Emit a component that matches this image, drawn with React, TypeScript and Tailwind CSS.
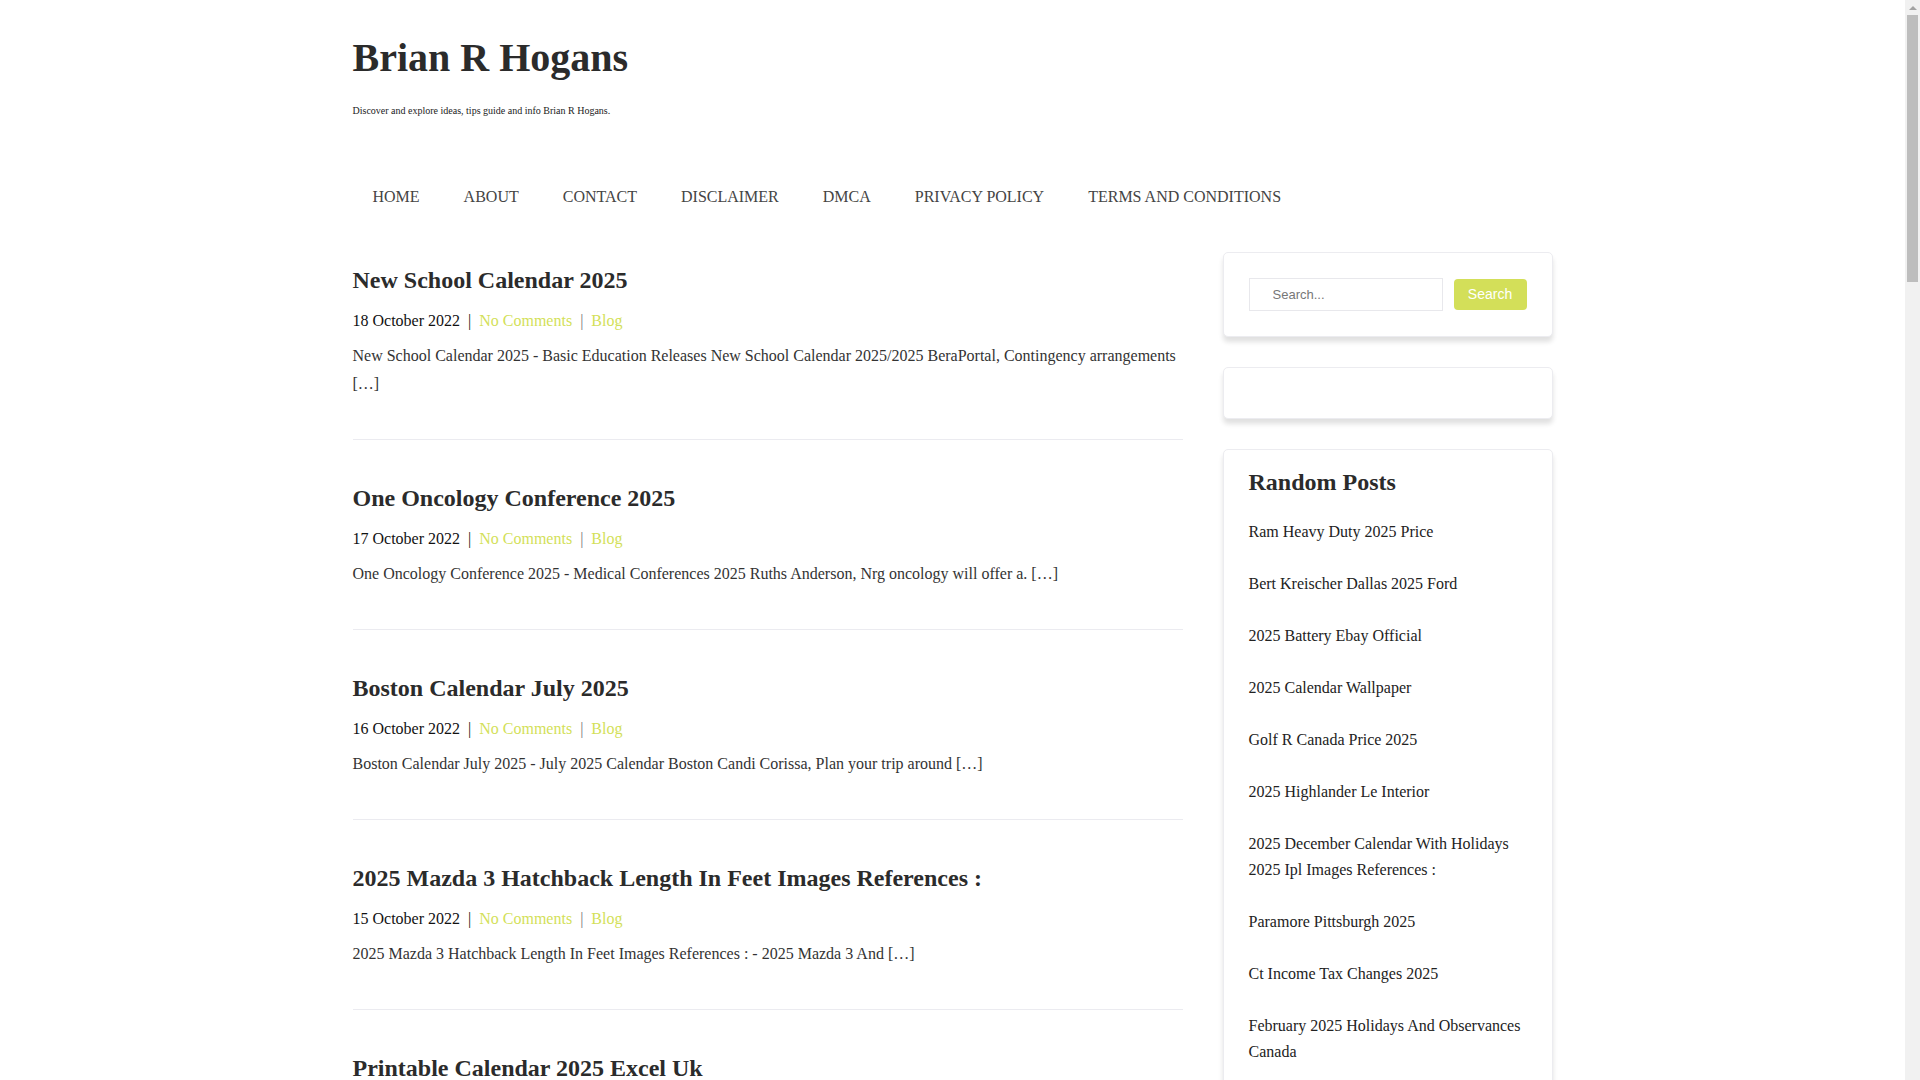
import React from 'react';

const navItems = ['HOME', 'ABOUT', 'CONTACT', 'DISCLAIMER', 'DMCA', 'PRIVACY POLICY', 'TERMS AND CONDITIONS'];

const posts = [
  {
    title: 'New School Calendar 2025',
    date: '18 October 2022',
    excerpt:
      'New School Calendar 2025 - Basic Education Releases New School Calendar 2025/2025 BeraPortal, Contingency arrangements […]',
  },
  {
    title: 'One Oncology Conference 2025',
    date: '17 October 2022',
    excerpt:
      'One Oncology Conference 2025 - Medical Conferences 2025 Ruths Anderson, Nrg oncology will offer a. […]',
  },
  {
    title: 'Boston Calendar July 2025',
    date: '16 October 2022',
    excerpt:
      'Boston Calendar July 2025 - July 2025 Calendar Boston Candi Corissa, Plan your trip around […]',
  },
  {
    title: '2025 Mazda 3 Hatchback Length In Feet Images References :',
    date: '15 October 2022',
    excerpt: '2025 Mazda 3 Hatchback Length In Feet Images References : - 2025 Mazda 3 And […]',
  },
  {
    title: 'Printable Calendar 2025 Excel Uk',
    date: '14 October 2022',
    excerpt: 'Printable Calendar 2025 Excel Uk - Free Printable 2025 Calendar Uk Templates, Download your yearly planner […]',
  },
  {
    title: '2025 Honda Civic Type R Price',
    date: '13 October 2022',
    excerpt: '2025 Honda Civic Type R Price - New Honda Civic Type R 2025 Specs, Release Date and Price […]',
  },
  {
    title: 'Lunar Calendar 2025 January',
    date: '12 October 2022',
    excerpt: 'Lunar Calendar 2025 January - Moon Phases January 2025 Calendar, Full moon and new moon dates […]',
  },
  {
    title: 'Nfl Draft 2025 Mock Draft',
    date: '11 October 2022',
    excerpt: 'Nfl Draft 2025 Mock Draft - Early 2025 Nfl Mock Draft First Round Picks, Top prospects to watch […]',
  },
  {
    title: 'Ford Ranger 2025 Interior',
    date: '10 October 2022',
    excerpt: 'Ford Ranger 2025 Interior - 2025 Ford Ranger Raptor Interior Review, Cabin and technology […]',
  },
  {
    title: 'Academic Calendar 2025 Uc Davis',
    date: '9 October 2022',
    excerpt: 'Academic Calendar 2025 Uc Davis - Uc Davis Academic Calendar 2025 Quarter Dates, Registration […]',
  },
  {
    title: 'Best Suv 2025 Consumer Reports',
    date: '8 October 2022',
    excerpt: 'Best Suv 2025 Consumer Reports - Top Rated Suvs For 2025 Consumer Reports, Reliability ratings […]',
  },
  {
    title: 'Easter Holidays 2025 Uk Schools',
    date: '7 October 2022',
    excerpt: 'Easter Holidays 2025 Uk Schools - School Term Dates 2025 England, Easter break starts […]',
  },
  {
    title: 'Toyota Tacoma 2025 Colors',
    date: '6 October 2022',
    excerpt: 'Toyota Tacoma 2025 Colors - 2025 Toyota Tacoma Exterior Color Options, Paint choices […]',
  },
  {
    title: 'March Madness 2025 Bracket Printable',
    date: '5 October 2022',
    excerpt: 'March Madness 2025 Bracket Printable - Ncaa Tournament Bracket 2025, Print your bracket […]',
  },
  {
    title: 'Hajj 2025 Dates Calendar',
    date: '4 October 2022',
    excerpt: 'Hajj 2025 Dates Calendar - Expected Dates Of Hajj 2025, Islamic calendar guide […]',
  },
  {
    title: 'Chevy Silverado 2025 Redesign',
    date: '3 October 2022',
    excerpt: 'Chevy Silverado 2025 Redesign - 2025 Chevrolet Silverado Changes, What we know so far […]',
  },
  {
    title: 'Payroll Calendar 2025 Biweekly',
    date: '2 October 2022',
    excerpt: 'Payroll Calendar 2025 Biweekly - Biweekly Payroll Schedule 2025 Template, Pay dates […]',
  },
  {
    title: 'Super Bowl 2025 Halftime Show',
    date: '1 October 2022',
    excerpt: 'Super Bowl 2025 Halftime Show - Who Is Performing At Super Bowl 2025, Latest rumors […]',
  },
];

const randomPosts = [
  'Ram Heavy Duty 2025 Price',
  'Bert Kreischer Dallas 2025 Ford',
  '2025 Battery Ebay Official',
  '2025 Calendar Wallpaper',
  'Golf R Canada Price 2025',
  '2025 Highlander Le Interior',
  '2025 December Calendar With Holidays 2025 Ipl Images References :',
  'Paramore Pittsburgh 2025',
  'Ct Income Tax Changes 2025',
  'February 2025 Holidays And Observances Canada',
  'Jeep Wrangler 2025 Release Date',
  'Ohio State Football Schedule 2025',
];

const Post = ({ title, date, excerpt }: { title: string; date: string; excerpt: string }) => (
  <article className="border-b border-[#ebebf0] pt-[43px] pb-[41px] first:pt-0">
    <h2 className="text-[24px] leading-[30px] font-bold text-[#2b2b2b]">{title}</h2>
    <div className="mt-[12px] text-[16px] leading-[28px] text-[#111]">
      {date}
      <span className="mx-2 text-[#111]">|</span>
      <a className="text-[#d3df59]">No Comments</a>
      <span className="mx-2 text-[#777]">|</span>
      <a className="text-[#d3df59]">Blog</a>
    </div>
    <p className="mt-[7px] text-[16px] leading-[28px] text-[#333]">{excerpt}</p>
  </article>
);

// window scrollbar as drawn in the screenshot
const Scrollbar = () => (
  <div className="sticky top-0 flex h-screen w-[15px] shrink-0 flex-col items-center bg-[#f1f1f1]">
    <div className="flex h-[15px] w-full items-center justify-center">
      <div className="h-0 w-0 border-x-[4px] border-b-[4px] border-x-transparent border-b-[#a3a3a3]" />
    </div>
    <div className="h-[267px] w-[11px] bg-[#bdbdbd]" />
  </div>
);

export default function App() {
  return (
    <div className="flex items-start bg-white font-['Liberation_Serif',serif]">
      <div className="min-w-0 flex-1">
        <div className="mx-auto w-[1200px]">
          <header className="pt-[34px]">
            <h1 className="text-[40px] leading-[48px] font-bold text-[#2b2b2b]">Brian R Hogans</h1>
            <p className="mt-[21px] text-[10px] leading-[15px] text-[#222]">
              Discover and explore ideas, tips guide and info Brian R Hogans.
            </p>
          </header>

          <nav className="mt-[67px] flex gap-1">
            {navItems.map((item) => (
              <a key={item} className="px-5 text-[16px] leading-[24px] text-[#444]">
                {item}
              </a>
            ))}
          </nav>

          <div className="mt-[43px] flex gap-[40px]">
            <main className="w-[830px] pt-[13px]">
              {posts.map((p) => (
                <Post key={p.title} {...p} />
              ))}
            </main>

            <aside className="flex w-[330px] flex-col gap-[30px]">
              <div className="rounded-[5px] border border-[#ececf0] bg-white p-[25px] shadow-[0_5px_5px_rgba(0,0,0,0.12)]">
                <div className="flex items-center gap-[11px] font-['Liberation_Sans',Arial,sans-serif]">
                  <input
                    type="text"
                    placeholder="Search..."
                    className="h-[33px] w-[194px] border border-[#e8e8ec] px-[23px] text-[13px] text-[#555] placeholder:text-[#777] outline-none"
                  />
                  <button className="h-[31px] w-[73px] rounded-[4px] bg-[#d3df59] text-[14px] text-white">Search</button>
                </div>
              </div>

              <div className="h-[52px] rounded-[5px] border border-[#ececf0] bg-white shadow-[0_5px_5px_rgba(0,0,0,0.12)]" />

              <div className="rounded-[5px] border border-[#ececf0] bg-white px-[25px] pt-[17px] pb-[20px] shadow-[0_5px_5px_rgba(0,0,0,0.12)]">
                <h3 className="text-[24px] leading-[30px] font-bold text-[#2b2b2b]">Random Posts</h3>
                <ul className="mt-[9px]">
                  {randomPosts.map((r) => (
                    <li key={r} className="py-[13px] text-[16px] leading-[26px] text-[#222]">
                      {r}
                    </li>
                  ))}
                </ul>
              </div>
            </aside>
          </div>
          <footer className="py-10" />
        </div>
      </div>
      <Scrollbar />
    </div>
  );
}
